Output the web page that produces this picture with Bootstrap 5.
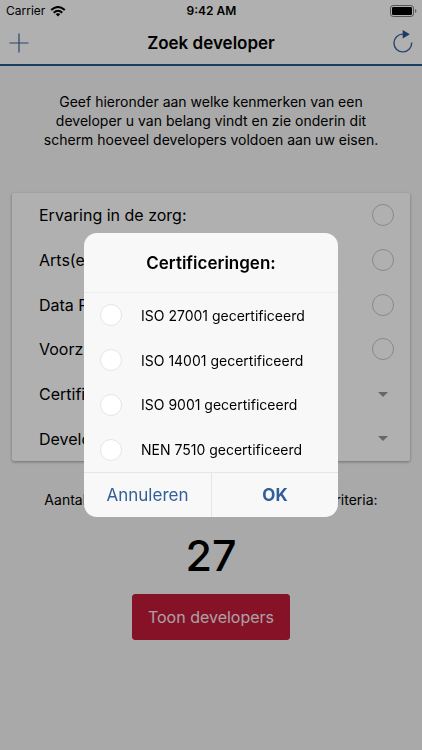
<!DOCTYPE html>
<html lang="nl">
<head>
<meta charset="utf-8">
<meta name="viewport" content="width=device-width, initial-scale=1">
<title>Zoek developer</title>
<link href="https://cdn.jsdelivr.net/npm/bootstrap@5.3.0/dist/css/bootstrap.min.css" rel="stylesheet">
<style>
  body { font-family: Inter, "Liberation Sans", sans-serif; font-size: 14px; color: #000; background: #f2f2f2; min-height: 100vh; }
  .top-area { background: #fdfdfd; border-bottom: 2px solid #26598f; }
  .status-bar { height: 22px; font-size: 12px; line-height: 22px; padding: 0 5px 0 6px; }
  .status-bar > div { flex: 1 1 0; }
  .title-bar { height: 42px; padding: 0 7px; }
  .title-bar h1 { font-size: 17px; line-height: 24px; }
  .icon-button { width: 24px; height: 24px; color: #3a6598; }
  .icon-button svg { overflow: visible; }
  .intro { padding: 26px 38px 0; line-height: 19px; }
  .criteria { margin: 44px 12px 0; min-height: 268px; background: #fdfdfd; border-radius: 2px; box-shadow: 0 1px 3px rgba(0,0,0,.35); }
  .criteria-row { padding: 0 16px 0 27px; font-size: 16px; line-height: 24px; }
  .round-check { appearance: none; width: 22px; height: 22px; border: 1px solid #c4c4c4; border-radius: 50%; background: transparent; }
  .round-check:checked { background: #3a6598; }
  .arrow-button { width: 22px; height: 22px; color: #949494; }
  .summary { padding-top: 29px; line-height: 20px; }
  .result-count { font-size: 43px; line-height: 50px; padding-top: 20px; font-weight: 500; }
  .show-button { --bs-btn-color: #f8e6ea; --bs-btn-bg: #bf1a39; --bs-btn-border-color: #bf1a39; --bs-btn-hover-bg: #a81532; --bs-btn-hover-color: #fff; --bs-btn-border-radius: 3px; --bs-btn-font-size: 16px; --bs-btn-line-height: 24px; --bs-btn-padding-x: 15px; --bs-btn-padding-y: 10px; margin-top: 14px; }
  .shade { background: rgba(0,0,0,.3); z-index: 10; }
  .alert-box { width: 254px; min-height: 284px; border-radius: 13px; background: #f8f8f8; }
  .alert-box h2 { font-size: 17px; line-height: 24px; padding: 18px 16px 17px; border-bottom: 1px solid #eeeeef; }
  .option-row { padding: 0 16px; gap: 19px; }
  .option-row .round-check { background: #fff; border-color: #e6e6e6; }
  .alert-actions { border-top: 1px solid #e6e6ea; }
  .alert-actions button { height: 44px; font-size: 17px; line-height: 24px; color: #315f99; }
  .alert-actions button + button { border-left: 1px solid #e6e6ea; }
</style>
<script src="https://cdn.jsdelivr.net/npm/bootstrap@5.3.0/dist/js/bootstrap.bundle.min.js"></script>
</head>
<body>
<header class="top-area">
  <div class="status-bar d-flex align-items-center">
    <div class="d-flex align-items-center gap-1">
      <span>Carrier</span>
      <svg width="17" height="11" viewBox="-1 0 17 11" fill="none" stroke="#000" stroke-width="2" aria-hidden="true"><path d="M1.2 4.1Q8-2.1 14.8 4.1M3.7 6.7Q8 2.7 12.3 6.7"/><path d="M8 10.5 5.6 8.1Q8 6.2 10.4 8.1Z" fill="#000" stroke="none"/></svg>
    </div>
    <span class="fw-semibold">9:42 AM</span>
    <div class="d-flex justify-content-end">
      <svg width="27" height="12" viewBox="0 0 27 12" aria-hidden="true"><rect x=".5" y=".5" width="23" height="11" rx="2.7" fill="none" stroke="#777"/><rect x="2" y="2" width="20" height="8" rx="1.3"/><path d="M25 4q1.5 .3 1.5 2T25 8Z" fill="#888"/></svg>
    </div>
  </div>
  <div class="title-bar d-flex align-items-center justify-content-between">
    <button class="icon-button btn p-0 border-0 d-flex" type="button" aria-label="Toevoegen">
      <svg width="24" height="24" viewBox="0 0 24 24" fill="none" stroke="currentColor" stroke-width="1.2"><path d="M12 2.5v19M2.5 12h19"/></svg>
    </button>
    <h1 class="fw-semibold m-0">Zoek developer</h1>
    <button class="icon-button btn p-0 border-0 d-flex" type="button" aria-label="Vernieuwen">
      <svg width="24" height="24" viewBox="0 0 24 24" fill="none" stroke="currentColor" stroke-width="1.4"><path d="M20.7 11.5A8.9 8.9 0 1 1 12 3.1h2"/><path d="M11.7-1 18.9 3.3l-7.2 4.2Z" fill="#26598f" stroke="none"/></svg>
    </button>
  </div>
</header>

<main class="d-flex flex-column">
  <p class="intro text-center mb-0">Geef hieronder aan welke kenmerken van een developer u van belang vindt en zie onderin dit scherm hoeveel developers voldoen aan uw eisen.</p>

  <section class="criteria d-flex flex-column">
    <div class="criteria-row d-flex flex-fill align-items-center justify-content-between"><label for="care">Ervaring in de zorg:</label><input class="round-check" id="care" type="checkbox"></div>
    <div class="criteria-row d-flex flex-fill align-items-center justify-content-between"><label for="doctor">Arts(en) in dienst:</label><input class="round-check" id="doctor" type="checkbox"></div>
    <div class="criteria-row d-flex flex-fill align-items-center justify-content-between"><label for="privacy">Data Protection Officer:</label><input class="round-check" id="privacy" type="checkbox"></div>
    <div class="criteria-row d-flex flex-fill align-items-center justify-content-between"><label for="facility">Voorzieningen:</label><input class="round-check" id="facility" type="checkbox"></div>
    <div class="criteria-row d-flex flex-fill align-items-center justify-content-between"><span>Certificeringen:</span><button class="arrow-button btn p-0 border-0 d-flex align-items-center justify-content-center" type="button" aria-label="Kies certificeringen"><svg width="10" height="5" viewBox="0 0 10 5" fill="currentColor"><path d="M0 0h10L5 5Z"/></svg></button></div>
    <div class="criteria-row d-flex flex-fill align-items-center justify-content-between"><span>Developers:</span><button class="arrow-button btn p-0 border-0 d-flex align-items-center justify-content-center" type="button" aria-label="Kies developers"><svg width="10" height="5" viewBox="0 0 10 5" fill="currentColor"><path d="M0 0h10L5 5Z"/></svg></button></div>
  </section>

  <p class="summary text-center mb-0">Aantal developers die voldoen aan al deze criteria:</p>
  <div class="result-count text-center">27</div>
  <button class="show-button btn align-self-center" type="button">Toon developers</button>
</main>

<div class="shade position-fixed top-0 start-0 w-100 h-100 d-flex align-items-center justify-content-center">
  <form class="alert-box d-flex flex-column overflow-hidden" role="dialog" aria-labelledby="alert-title">
    <h2 class="fw-semibold text-center m-0" id="alert-title">Certificeringen:</h2>
    <div class="option-row d-flex flex-fill align-items-center"><input class="round-check" id="iso27001" type="checkbox"><label for="iso27001">ISO 27001 gecertificeerd</label></div>
    <div class="option-row d-flex flex-fill align-items-center"><input class="round-check" id="iso14001" type="checkbox"><label for="iso14001">ISO 14001 gecertificeerd</label></div>
    <div class="option-row d-flex flex-fill align-items-center"><input class="round-check" id="iso9001" type="checkbox"><label for="iso9001">ISO 9001 gecertificeerd</label></div>
    <div class="option-row d-flex flex-fill align-items-center"><input class="round-check" id="nen7510" type="checkbox"><label for="nen7510">NEN 7510 gecertificeerd</label></div>
    <div class="alert-actions d-flex">
      <button class="w-50 border-0 bg-transparent p-0" type="button">Annuleren</button>
      <button class="w-50 border-top-0 border-end-0 border-bottom-0 bg-transparent p-0 fw-bold" type="button">OK</button>
    </div>
  </form>
</div>
</body>
</html>
